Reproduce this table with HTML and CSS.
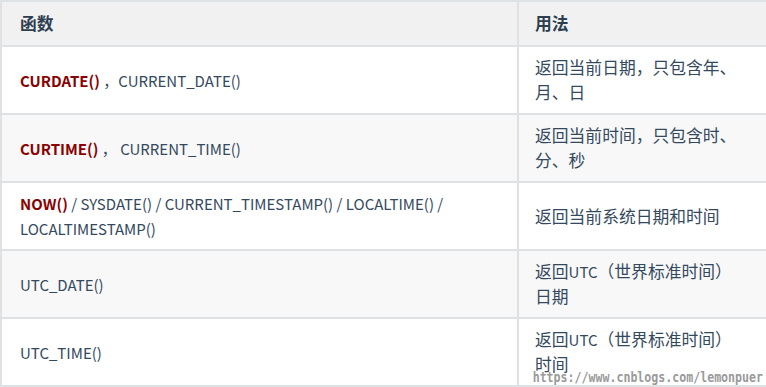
FILE: index.html
```html
<!DOCTYPE html>
<html lang="zh-CN">
<head>
<meta charset="utf-8">
<link rel="stylesheet" href="styles.css">
</head>
<body>
<div class="wrap">
  <table class="fn-table">
    <colgroup>
      <col class="c1">
      <col class="c2">
    </colgroup>
    <thead>
      <tr><th>函数</th><th class="use">用法</th></tr>
    </thead>
    <tbody>
      <tr>
        <td class="code"><strong class="kw">CURDATE()</strong> ，CURRENT_DATE()</td>
        <td class="use">返回当前日期，只包含年、月、日</td>
      </tr>
      <tr>
        <td class="code"><strong class="kw">CURTIME()</strong> ， CURRENT_TIME()</td>
        <td class="use">返回当前时间，只包含时、分、秒</td>
      </tr>
      <tr>
        <td class="code"><strong class="kw">NOW()</strong> / SYSDATE() / CURRENT_TIMESTAMP() / LOCALTIME() / LOCALTIMESTAMP()</td>
        <td class="use">返回当前系统日期和时间</td>
      </tr>
      <tr>
        <td class="code">UTC_DATE()</td>
        <td class="use">返回<span class="lat">UTC</span>（世界标准时间）日期</td>
      </tr>
      <tr>
        <td class="code">UTC_TIME()</td>
        <td class="use">返回<span class="lat">UTC</span>（世界标准时间）时间</td>
      </tr>
    </tbody>
  </table>
  <div class="watermark">https://www.cnblogs.com/lemonpuer</div>
</div>
</body>
</html>
```

FILE: styles.css
```css
html, body {
  margin: 0;
  padding: 0;
  background: #ffffff;
}

.wrap {
  position: relative;
  width: 766px;
  height: 387px;
  overflow: hidden;
}

.fn-table {
  width: 766px;
  table-layout: fixed;
  border-collapse: collapse;
  font-family: "Noto Sans CJK SC", "Noto Sans", sans-serif;
  font-size: 16.8px;
  line-height: 25px;
  color: #34495e;
}

.c1 { width: 517px; }
.c2 { width: 249px; }

.fn-table th,
.fn-table td {
  border: 2px solid #dfe2e5;
  padding: 8px 17px 8px 18px;
  text-align: left;
  vertical-align: middle;
}

.fn-table .use {
  padding-left: 16px;
  padding-right: 19px;
}

.fn-table th {
  background: #f1f1f1;
  font-weight: 700;
  color: #2c3e50;
  padding-top: 9px;
  padding-bottom: 9px;
}

.fn-table tbody tr:nth-child(even) td {
  background: #f8f8f8;
}

.fn-table td.code {
  font-size: 15px;
}

.lat {
  font-size: 15px;
}

.kw {
  color: #8b0000;
  font-weight: 700;
}

.watermark {
  position: absolute;
  right: 3px;
  bottom: 1px;
  font-family: "DejaVu Sans Mono", "Liberation Mono", monospace;
  font-size: 11.6px;
  font-weight: 700;
  line-height: 14px;
  color: #9a9a9a;
  text-shadow: 0 0 1px #ffffff, 0 0 1px #ffffff;
  transform: scaleY(1.2);
  transform-origin: bottom right;
}
```
